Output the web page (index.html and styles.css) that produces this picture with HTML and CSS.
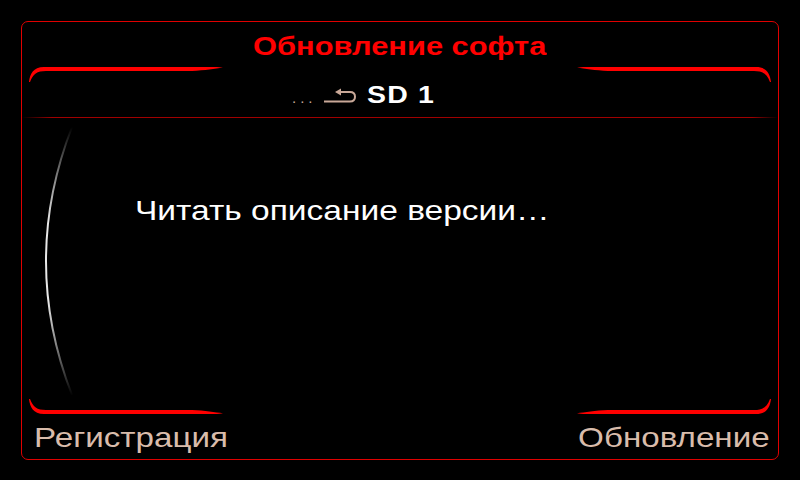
FILE: index.html
```html
<!DOCTYPE html>
<html lang="ru">
<head>
<meta charset="utf-8">
<title>Обновление софта</title>
<link rel="stylesheet" href="styles.css">
</head>
<body>
<div class="screen">
  <svg class="deco" width="800" height="480" viewBox="0 0 800 480" aria-hidden="true">
    <defs>
      <linearGradient id="arc" gradientUnits="userSpaceOnUse" x1="0" y1="127" x2="0" y2="396">
        <stop offset="0" stop-color="#fff" stop-opacity="0"/>
        <stop offset="0.35" stop-color="#e8e8e8" stop-opacity="1"/>
        <stop offset="0.65" stop-color="#e8e8e8" stop-opacity="1"/>
        <stop offset="1" stop-color="#fff" stop-opacity="0"/>
      </linearGradient>
      <g id="swoosh">
        <path d="M29,82 C30,74 33,67 44,67 L214,67 C218,67 221,67.4 223,67.8 C215,68.6 205,70.5 192,71 L46,71 C37,71 33,74 30,82 Z" fill="#ff0000"/>
      </g>
    </defs>
    <use href="#swoosh"/>
    <use href="#swoosh" transform="translate(800,0) scale(-1,1)"/>
    <use href="#swoosh" transform="translate(0,481) scale(1,-1)"/>
    <use href="#swoosh" transform="translate(800,481) scale(-1,-1)"/>
    <path d="M72,127 Q20,261 72,395" fill="none" stroke="url(#arc)" stroke-width="2"/>
  </svg>
  <div class="frame">
    <header class="title"><span class="wide wide-center">Обновление софта</span></header>
    <div class="crumb">
      <span class="dots">...</span>
      <svg class="back" width="34" height="16" viewBox="0 0 34 16" aria-hidden="true">
        <path d="M1,13.5 H27 Q32,13.5 32,8.75 Q32,4 27,4 H15" fill="none" stroke="#c9a898" stroke-width="2"/>
        <path d="M12,4 L18,0.5 L18,7.5 Z" fill="#c9a898"/>
      </svg>
      <span class="sd wide">SD 1</span>
    </div>
    <div class="sep"></div>
    <main class="content">
      <p class="item"><span class="wide wide-more">Читать описание версии…</span></p>
    </main>
    <footer class="softkeys">
      <span class="key wide">Регистрация</span>
      <span class="key wide wide-right">Обновление</span>
    </footer>
  </div>
</div>
</body>
</html>
```

FILE: styles.css
```css
html, body {
  margin: 0;
  padding: 0;
  background: #000;
}
body {
  font-family: "Liberation Sans", Arial, sans-serif;
}
.screen {
  position: relative;
  width: 800px;
  height: 480px;
  padding: 21px;
  box-sizing: border-box;
  background: #000;
}
.deco {
  position: absolute;
  left: 0;
  top: 0;
  pointer-events: none;
}
.frame {
  height: 439px;
  box-sizing: border-box;
  border: 1px solid #e00000;
  border-radius: 7px;
  display: flex;
  flex-direction: column;
}
.wide {
  display: inline-block;
  transform: scaleX(1.185);
  transform-origin: left center;
}
.wide-more {
  transform: scaleX(1.197);
}
.wide-center {
  transform-origin: center center;
}
.wide-right {
  transform-origin: right center;
}
.title {
  padding: 9px 0 0 0;
  height: 46px;
  box-sizing: border-box;
  text-align: center;
  color: #ff0000;
  font-weight: bold;
  font-size: 26px;
  line-height: 30px;
}
.crumb {
  display: flex;
  align-items: center;
  height: 49px;
  box-sizing: border-box;
  padding: 13px 0 8px 270px;
  gap: 6px;
}
.dots {
  color: #c9a898;
  font-size: 15px;
  letter-spacing: 4px;
  align-self: flex-end;
  line-height: 22px;
}
.back {
  margin-top: 2px;
}
.sd {
  color: #fff;
  font-weight: bold;
  font-size: 24px;
  line-height: 28px;
  margin-left: 4px;
  letter-spacing: 1px;
}
.sep {
  height: 1px;
  background: linear-gradient(to right, rgba(170,0,0,0) 0, #a00000 30px, #a00000 730px, rgba(170,0,0,0) 756px);
}
.content {
  flex: 1;
  padding: 77px 0 0 113px;
}
.item {
  margin: 0;
  color: #fff;
  font-size: 28px;
  line-height: 32px;
}
.softkeys {
  display: flex;
  justify-content: space-between;
  height: 37px;
  box-sizing: border-box;
  padding: 0 8px 0 12px;
}
.key {
  color: #d9bcab;
  font-size: 28px;
  line-height: 32px;
}
```
